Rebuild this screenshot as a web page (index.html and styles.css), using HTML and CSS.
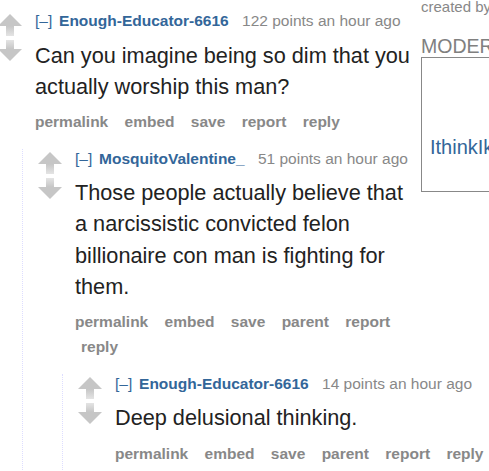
FILE: index.html
```html
<!DOCTYPE html>
<html lang="en">
<head>
<meta charset="utf-8">
<title>comments</title>
<link rel="stylesheet" href="styles.css">
</head>
<body>
<aside class="side">
  <div class="side-inner">
    <p class="created">created by</p>
    <h2 class="mods-title">MODERATORS</h2>
    <div class="mods-box"><a class="mod" href="#">IthinkIknowThings</a></div>
  </div>
</aside>

<div class="comments">
  <div class="comment">
    <div class="row">
      <div class="midcol">
        <svg width="24" height="48" viewBox="0 0 24 48">
          <defs>
            <linearGradient id="gu" x1="0" y1="0" x2="0" y2="1">
              <stop offset="0" stop-color="#c6c6c6"/>
              <stop offset="1" stop-color="#e4e4e4"/>
            </linearGradient>
            <linearGradient id="gd" x1="0" y1="0" x2="0" y2="1">
              <stop offset="0" stop-color="#e4e4e4"/>
              <stop offset="1" stop-color="#c6c6c6"/>
            </linearGradient>
          </defs>
          <polygon points="12,0 24,12 0,12" fill="#c6c6c6"/>
          <rect x="8" y="12" width="8" height="10" fill="url(#gu)"/>
          <rect x="8" y="26" width="8" height="9" fill="url(#gd)"/>
          <polygon points="0,35 24,35 12,47" fill="#c6c6c6"/>
        </svg>
      </div>
      <div class="entry">
        <p class="tagline"><a class="expand" href="#">[–]</a> <a class="author" href="#">Enough-Educator-6616</a> <span class="score">122 points</span> <time>an hour ago</time></p>
        <div class="md"><p>Can you imagine being so dim that you actually worship this man?</p></div>
        <ul class="buttons">
          <li><a href="#">permalink</a></li>
          <li><a href="#">embed</a></li>
          <li><a href="#">save</a></li>
          <li><a href="#">report</a></li>
          <li><a href="#">reply</a></li>
        </ul>
      </div>
    </div>
    <div class="child">
      <div class="comment">
        <div class="row">
          <div class="midcol">
            <svg width="24" height="48" viewBox="0 0 24 48">
              <polygon points="12,0 24,12 0,12" fill="#c6c6c6"/>
              <rect x="8" y="12" width="8" height="10" fill="url(#gu)"/>
              <rect x="8" y="26" width="8" height="9" fill="url(#gd)"/>
              <polygon points="0,35 24,35 12,47" fill="#c6c6c6"/>
            </svg>
          </div>
          <div class="entry">
            <p class="tagline"><a class="expand" href="#">[–]</a> <a class="author" href="#">MosquitoValentine_</a> <span class="score">51 points</span> <time>an hour ago</time></p>
            <div class="md"><p>Those people actually believe that a narcissistic convicted felon billionaire con man is fighting for them.</p></div>
            <ul class="buttons">
              <li><a href="#">permalink</a></li>
              <li><a href="#">embed</a></li>
              <li><a href="#">save</a></li>
              <li><a href="#">parent</a></li>
              <li><a href="#">report</a></li>
              <li><a href="#">reply</a></li>
            </ul>
          </div>
        </div>
        <div class="child">
          <div class="comment">
            <div class="row">
              <div class="midcol">
                <svg width="24" height="48" viewBox="0 0 24 48">
                  <polygon points="12,0 24,12 0,12" fill="#c6c6c6"/>
                  <rect x="8" y="12" width="8" height="10" fill="url(#gu)"/>
                  <rect x="8" y="26" width="8" height="9" fill="url(#gd)"/>
                  <polygon points="0,35 24,35 12,47" fill="#c6c6c6"/>
                </svg>
              </div>
              <div class="entry">
                <p class="tagline"><a class="expand" href="#">[–]</a> <a class="author" href="#">Enough-Educator-6616</a> <span class="score">14 points</span> <time>an hour ago</time></p>
                <div class="md"><p>Deep delusional thinking.</p></div>
                <ul class="buttons">
                  <li><a href="#">permalink</a></li>
                  <li><a href="#">embed</a></li>
                  <li><a href="#">save</a></li>
                  <li><a href="#">parent</a></li>
                  <li><a href="#">report</a></li>
                  <li><a href="#">reply</a></li>
                </ul>
              </div>
            </div>
          </div>
        </div>
      </div>
    </div>
  </div>
</div>
</body>
</html>
```

FILE: styles.css
```css
html, body {
  overflow: hidden;
}

body {
  margin: 0;
  background: #fff;
  font-family: "Liberation Sans", Arial, sans-serif;
}

a {
  text-decoration: none;
}

/* sidebar */
.side {
  float: right;
  width: 68px;
  margin-left: 5px;
  margin-top: -3px;
  overflow: hidden;
}

.side-inner {
  width: 300px;
}

.created {
  margin: 0;
  font-size: 15px;
  line-height: 20px;
  color: #888;
}

.mods-title {
  margin: 18px 0 0;
  font-size: 19.5px;
  font-weight: normal;
  line-height: 22px;
  color: #808080;
}

.mods-box {
  border: 1px solid #888;
  padding: 77px 8px 32px;
}

.mod {
  display: block;
  font-size: 20px;
  line-height: 24px;
  color: #369;
  white-space: nowrap;
}

/* comments */
.comments {
  padding-top: 11px;
  margin-left: -2px;
}

.row {
  display: flex;
}

.midcol {
  flex: none;
  width: 24px;
  margin: 3px 13px 0 0;
}

.midcol svg {
  display: block;
}

.entry {
  flex: 1;
  min-width: 0;
  margin-bottom: 14.5px;
}

.tagline {
  margin: 0;
  font-size: 15.5px;
  line-height: 20px;
  color: #888;
}

.expand {
  color: #369;
  margin-right: 2.5px;
}

.author {
  color: #369;
  font-weight: bold;
  margin-right: 9px;
}

.md {
  margin-top: 8.5px;
  font-size: 21.7px;
  line-height: 31.3px;
  color: #222;
}

.md p {
  margin: 0;
}

.buttons {
  list-style: none;
  margin: 7px 0 0;
  padding: 0;
  font-size: 15.5px;
  line-height: 25px;
  font-weight: bold;
}

.buttons li {
  display: inline;
  padding: 0 6px;
}

.buttons li:first-child {
  padding-left: 0;
}

.buttons li:last-child {
  padding-right: 0;
}

.buttons a {
  color: #888;
}

.child {
  margin-left: 24px;
  border-left: 1px dotted #ddf;
}

.child > .comment {
  padding-left: 15px;
}
```
